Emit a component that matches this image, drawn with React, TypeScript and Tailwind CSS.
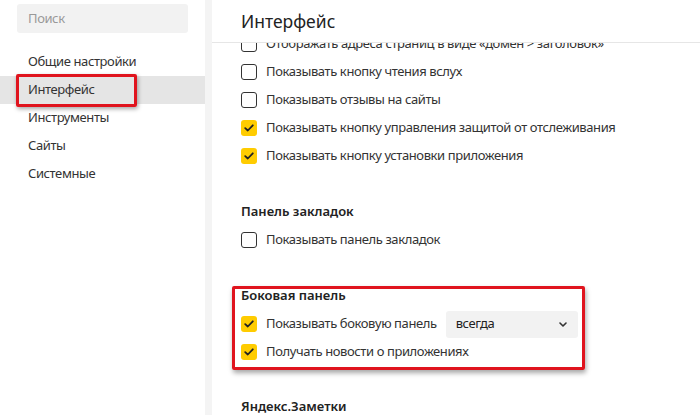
import React from "react";

function Check({ checked }: { checked?: boolean }) {
  if (checked) {
    return (
      <span className="flex h-4 w-4 shrink-0 items-center justify-center rounded-[3px] bg-[#ffcc00]">
        <svg width="10" height="8" viewBox="0 0 10 8" fill="none">
          <path d="M1.2 4.1 L3.8 6.5 L8.8 1.3" stroke="#222" strokeWidth="1.8" strokeLinecap="round" strokeLinejoin="round" />
        </svg>
      </span>
    );
  }
  return <span className="h-4 w-4 shrink-0 rounded-[3px] border-[1.5px] border-[#333]" />;
}

function Row({ label, checked, children }: { label: string; checked?: boolean; children?: React.ReactNode }) {
  return (
    <div className="flex h-7 items-center gap-[9px]">
      <Check checked={checked} />
      <span>{label}</span>
      {children}
    </div>
  );
}

function Heading({ children }: { children: React.ReactNode }) {
  return <div className="flex h-7 items-center font-semibold tracking-normal text-[#222]">{children}</div>;
}

const menu = ["Общие настройки", "Интерфейс", "Инструменты", "Сайты", "Системные"];

export default function App() {
  return (
    <div
      className="flex h-[415px] w-[700px] overflow-hidden bg-white text-[13px] tracking-[-0.4px] text-[#333]"
      style={{ fontFamily: '"Noto Sans", "Open Sans", sans-serif' }}
    >
      <aside className="relative w-[205px] shrink-0 pt-1">
        <div className="mx-[17px] flex h-[29px] items-center rounded-[3px] bg-[#f2f2f2] px-[11px] text-[#999]">
          Поиск
        </div>
        <nav className="mt-[15px]">
          {menu.map((m) => (
            <div
              key={m}
              className={`flex h-7 items-center px-[28px] ${m === "Интерфейс" ? "bg-[#e5e5e5]" : ""}`}
            >
              {m}
            </div>
          ))}
        </nav>
        <div className="absolute left-[16px] top-[74px] h-[33px] w-[121px] rounded-[2px] border-[3px] border-[#e0141e] shadow-[1px_2px_4px_rgba(0,0,0,0.35)]" />
      </aside>
      <div className="w-[7px] shrink-0 bg-[#f4f4f4]" />
      <main className="flex flex-1 flex-col overflow-hidden">
        <header className="relative z-10 flex h-[43px] shrink-0 items-center border-b border-[#e6e6e6] bg-white pl-[29px] text-[17.5px] tracking-normal text-[#222]">
          Интерфейс
        </header>
        <div className="relative -mt-[13px] pl-[29px]">
          <Row label="Отображать адреса страниц в виде «домен > заголовок»" />
          <Row label="Показывать кнопку чтения вслух" />
          <Row label="Показывать отзывы на сайты" />
          <Row label="Показывать кнопку управления защитой от отслеживания" checked />
          <Row label="Показывать кнопку установки приложения" checked />

          <div className="mt-7">
            <Heading>Панель закладок</Heading>
            <Row label="Показывать панель закладок" />
          </div>

          <div className="mt-7">
            <Heading>Боковая панель</Heading>
            <Row label="Показывать боковую панель" checked>
              <div className="flex h-[27px] w-[132px] items-center justify-between rounded-[3px] bg-[#f2f2f2] pl-[10px] pr-[11px] text-[#222]">
                <span>всегда</span>
                <svg width="8" height="5" viewBox="0 0 8 5" fill="none">
                  <path d="M1 1 L4 4 L7 1" stroke="#333" strokeWidth="1.6" strokeLinecap="round" strokeLinejoin="round" />
                </svg>
              </div>
            </Row>
            <Row label="Получать новости о приложениях" checked />
          </div>

          <div className="mt-[27px]">
            <Heading>Яндекс.Заметки</Heading>
          </div>

          <div className="absolute left-[20px] top-[256px] h-[84px] w-[353px] rounded-[2px] border-[3px] border-[#e0141e] shadow-[1px_3px_5px_rgba(0,0,0,0.35)]" />
        </div>
      </main>
    </div>
  );
}
